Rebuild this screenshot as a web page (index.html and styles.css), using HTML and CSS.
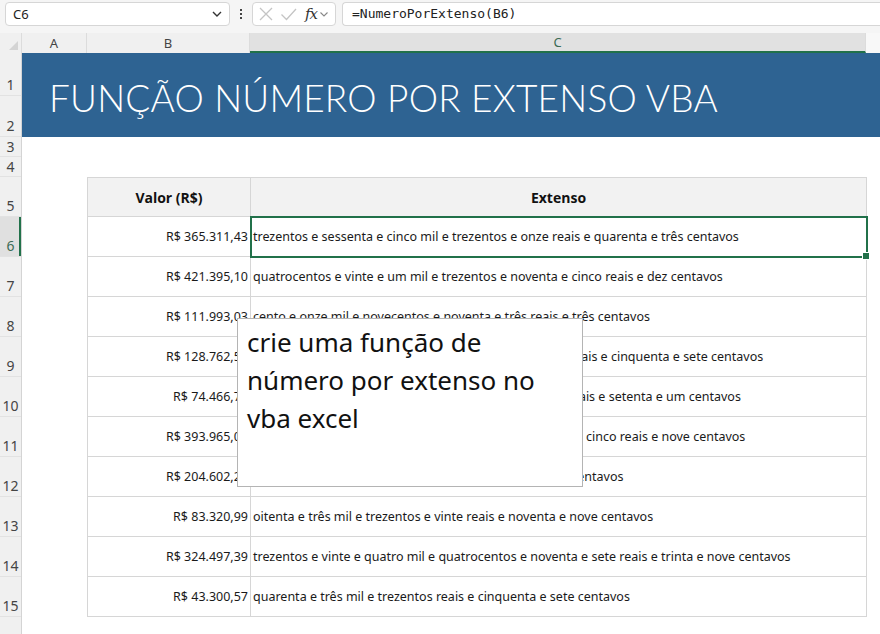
FILE: index.html
```html
<!DOCTYPE html>
<html lang="pt-BR">
<head>
  <meta charset="UTF-8">
  <title>Função Número por Extenso VBA</title>
  <link rel="stylesheet" href="styles.css">
</head>
<body>

  <!-- formula bar -->
  <div class="topbar">
    <div class="namebox">
      <span>C6</span>
      <svg class="chev" width="12" height="8" viewBox="0 0 12 8"><path d="M2 2l4 4 4-4" fill="none" stroke="#333" stroke-width="1.4"/></svg>
    </div>
    <div class="grip"><i></i><i></i><i></i></div>
    <div class="fx-tools">
      <svg width="16" height="16" viewBox="0 0 16 16"><path d="M2 2l12 12M14 2L2 14" stroke="#c4c4c4" stroke-width="1.3"/></svg>
      <svg width="17" height="16" viewBox="0 0 17 16"><path d="M1.5 8.5l5 5L16 3" fill="none" stroke="#c4c4c4" stroke-width="1.3"/></svg>
      <span class="fx">fx</span>
      <svg class="chev-sm" width="10" height="8" viewBox="0 0 10 8"><path d="M1.5 2.5L5 6l3.5-3.5" fill="none" stroke="#888" stroke-width="1.1"/></svg>
    </div>
    <div class="formula">=NumeroPorExtenso(B6)</div>
  </div>

  <!-- column letters -->
  <div class="colheads">
    <div class="corner"></div>
    <div class="colhead col-a">A</div>
    <div class="colhead col-b">B</div>
    <div class="colhead col-c current">C</div>
    <div class="colhead col-d"></div>
  </div>

  <div class="sheet">
    <div class="rowheads">
      <div class="rowhead r1">1</div>
      <div class="rowhead r2">2</div>
      <div class="rowhead short">3</div>
      <div class="rowhead short">4</div>
      <div class="rowhead">5</div>
      <div class="rowhead current">6</div>
      <div class="rowhead">7</div>
      <div class="rowhead">8</div>
      <div class="rowhead">9</div>
      <div class="rowhead">10</div>
      <div class="rowhead">11</div>
      <div class="rowhead">12</div>
      <div class="rowhead">13</div>
      <div class="rowhead">14</div>
      <div class="rowhead">15</div>
      <div class="rowhead"></div>
    </div>

    <div class="cells">
      <div class="banner">
        <h1>FUNÇÃO NÚMERO POR EXTENSO VBA</h1>
      </div>
      <div class="spacer"></div>

      <div class="table">
        <div class="th">Valor (R$)</div>
        <div class="th">Extenso</div>

        <div class="td val">R$ 365.311,43</div>
        <div class="td txt active">trezentos e sessenta e cinco mil e trezentos e onze reais e quarenta e três centavos</div>

        <div class="td val">R$ 421.395,10</div>
        <div class="td txt">quatrocentos e vinte e um mil e trezentos e noventa e cinco reais e dez centavos</div>

        <div class="td val">R$ 111.993,03</div>
        <div class="td txt">cento e onze mil e novecentos e noventa e três reais e três centavos</div>

        <div class="td val">R$ 128.762,57</div>
        <div class="td txt">cento e vinte e oito mil e setecentos e sessenta e dois reais e cinquenta e sete centavos</div>

        <div class="td val">R$ 74.466,71</div>
        <div class="td txt">setenta e quatro mil e quatrocentos e sessenta e seis reais e setenta e um centavos</div>

        <div class="td val">R$ 393.965,09</div>
        <div class="td txt">trezentos e noventa e três mil e novecentos e sessenta e cinco reais e nove centavos</div>

        <div class="td val">R$ 204.602,20</div>
        <div class="td txt">duzentos e quatro mil e seiscentos e dois reais e vinte centavos</div>

        <div class="td val">R$ 83.320,99</div>
        <div class="td txt">oitenta e três mil e trezentos e vinte reais e noventa e nove centavos</div>

        <div class="td val">R$ 324.497,39</div>
        <div class="td txt">trezentos e vinte e quatro mil e quatrocentos e noventa e sete reais e trinta e nove centavos</div>

        <div class="td val">R$ 43.300,57</div>
        <div class="td txt">quarenta e três mil e trezentos reais e cinquenta e sete centavos</div>
      </div>
    </div>

    <!-- text box floating over the sheet -->
    <div class="note">crie uma função de número por extenso no vba excel</div>
  </div>

</body>
</html>
```

FILE: styles.css
```css
* {
    box-sizing: border-box;
}

body {
    margin: 0;
    width: 880px;
    height: 634px;
    overflow: hidden;
    background: #fff;
    font-family: "Noto Sans", "Open Sans", sans-serif;
    color: #222;
}

/* formula bar */
.topbar {
    height: 33px;
    background: #f5f5f5;
    display: flex;
    align-items: flex-start;
    padding: 2px 0 0 5px;
}

.namebox {
    width: 225px;
    height: 24px;
    background: #fff;
    border: 1px solid #d6d6d6;
    border-radius: 4px;
    display: flex;
    align-items: center;
    justify-content: space-between;
    padding: 0 6px 0 7px;
    font-size: 13px;
}

.grip {
    width: 22px;
    height: 24px;
    display: flex;
    flex-direction: column;
    align-items: center;
    justify-content: center;
    gap: 2px;
}

.grip i {
    width: 2px;
    height: 2px;
    background: #444;
}

.fx-tools {
    width: 84px;
    height: 24px;
    background: #fff;
    border: 1px solid #d6d6d6;
    border-radius: 4px;
    display: flex;
    align-items: center;
    gap: 6px;
    padding: 0 0 0 5px;
}

.fx {
    font-family: "DejaVu Serif", "Liberation Serif", serif;
    font-style: italic;
    font-size: 15px;
    color: #333;
    margin-left: 2px;
    letter-spacing: -1px;
}

.chev-sm {
    margin-left: -4px;
}

.formula {
    flex: 1;
    height: 24px;
    margin-left: 6px;
    background: #fff;
    border: 1px solid #d6d6d6;
    border-right: 0;
    border-radius: 4px 0 0 4px;
    padding: 0 0 0 9px;
    line-height: 22px;
    font-family: "DejaVu Sans Mono", "Liberation Mono", monospace;
    font-size: 13px;
    color: #222;
}

/* column letters */
.colheads {
    display: flex;
    height: 20px;
}

.corner {
    width: 22px;
    background: #f0f0f0;
    border-right: 1px solid #dcdcdc;
    position: relative;
}

.corner::after {
    content: "";
    position: absolute;
    right: 3px;
    bottom: 3px;
    border-left: 9px solid transparent;
    border-bottom: 9px solid #d4d4d4;
}

.colhead {
    background: #f0f0f0;
    border-right: 1px solid #dcdcdc;
    font-size: 13px;
    color: #444;
    text-align: center;
    line-height: 20px;
}

.col-a { width: 65px; }
.col-b { width: 163px; }
.col-c { width: 616px; }
.col-d { flex: 1; background: #f8f8f8; border-right: 0; }

.colhead.current {
    background: #e1e1e1;
    color: #3c6a54;
    border-bottom: 2px solid #21714a;
    line-height: 18px;
}

/* sheet body */
.sheet {
    display: flex;
    position: relative;
}

.rowheads {
    width: 22px;
    background: #f0f0f0;
    border-right: 1px solid #d4d4d4;
}

.rowhead {
    height: 40px;
    display: flex;
    align-items: flex-end;
    justify-content: center;
    padding-bottom: 1px;
    font-size: 14px;
    line-height: 18px;
    color: #444;
    border-bottom: 1px solid #e2e2e2;
}

.rowhead.r1 { height: 43px; }
.rowhead.r2 { height: 41px; }
.rowhead.short { height: 20px; padding-bottom: 0; }

.rowhead.current {
    background: #e0e0e0;
    color: #3c6a54;
    box-shadow: inset -2px 0 0 #21714a;
}

.cells {
    flex: 1;
}

.banner {
    height: 84px;
    background: #2e6392;
    display: flex;
    align-items: center;
    padding: 4px 0 0 27px;
}

.banner h1 {
    margin: 0;
    font-family: Lato, sans-serif;
    font-weight: 300;
    font-size: 37px;
    color: #fff;
    letter-spacing: 0.2px;
}

.spacer {
    height: 40px;
}

/* data table */
.table {
    margin-left: 65px;
    width: 779px;
    display: grid;
    grid-template-columns: 163px 616px;
    grid-auto-rows: 40px;
    border-left: 1px solid #d6d6d6;
}

.th {
    background: #f2f2f2;
    border-top: 1px solid #d6d6d6;
    border-right: 1px solid #d6d6d6;
    border-bottom: 1px solid #d6d6d6;
    display: flex;
    align-items: center;
    justify-content: center;
    font-family: "Open Sans", sans-serif;
    font-weight: 700;
    font-size: 14px;
    color: #111;
}

.td {
    border-right: 1px solid #d6d6d6;
    border-bottom: 1px solid #d6d6d6;
    display: flex;
    align-items: center;
    font-size: 12.5px;
    color: #1a1a1a;
    white-space: nowrap;
    overflow: hidden;
}

.td.val {
    justify-content: flex-end;
    padding-right: 2px;
}

.td.txt {
    padding-left: 2px;
}

.td.active {
    position: relative;
    overflow: visible;
    outline: 2px solid #21714a;
    outline-offset: -1px;
}

.td.active::after {
    content: "";
    position: absolute;
    right: -4px;
    bottom: -4px;
    width: 6px;
    height: 6px;
    background: #21714a;
    border: 1px solid #fff;
}

.note {
    position: absolute;
    left: 237px;
    top: 265px;
    width: 346px;
    height: 169px;
    background: #fff;
    border: 1px solid #b4b4b4;
    padding: 4px 30px 0 9px;
    font-family: "Noto Sans", sans-serif;
    font-size: 26px;
    line-height: 38px;
    color: #111;
}
```
